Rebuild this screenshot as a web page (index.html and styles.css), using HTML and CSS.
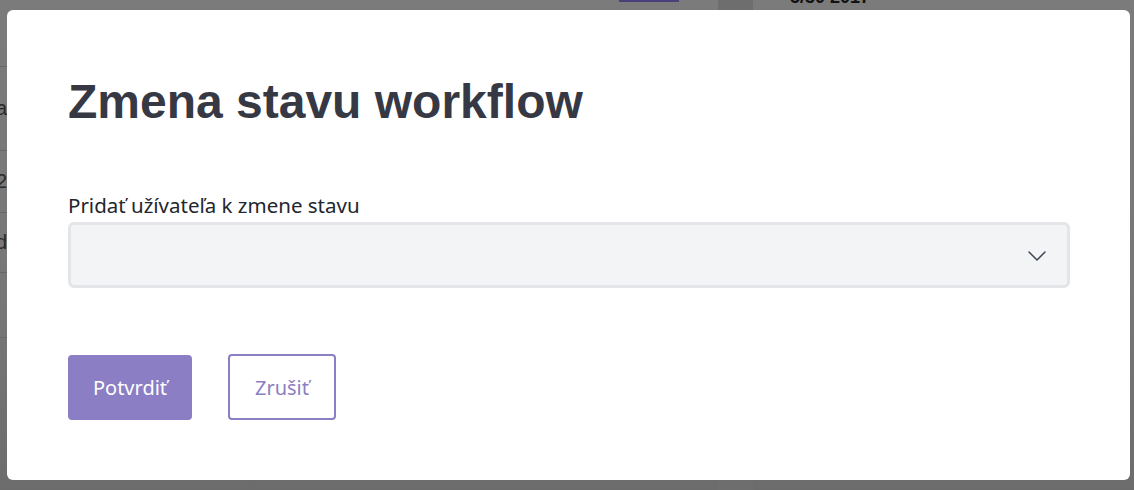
FILE: index.html
```html
<!DOCTYPE html>
<html lang="sk">
<head>
<meta charset="utf-8">
<title>Zmena stavu workflow</title>
<link rel="stylesheet" href="styles.css">
</head>
<body>
<div class="page">
  <div class="table-col">
    <div class="row r1"></div>
    <div class="row r2"><span class="cell">a</span></div>
    <div class="row r3"><span class="cell">2</span></div>
    <div class="row r4"><span class="cell">d</span></div>
    <div class="row r5"></div>
  </div>
  <div class="strip"></div>
  <div class="side-col">
    <div class="side-text">5/30 2017</div>
  </div>
</div>

<div class="overlay">
  <div class="modal" role="dialog" aria-labelledby="modal-title">
    <h1 id="modal-title" class="modal-title">Zmena stavu workflow</h1>
    <div class="field">
      <label class="field-label" for="user-select">Pridať užívateľa k zmene stavu</label>
      <div class="select" id="user-select" tabindex="0">
        <svg class="chevron" width="18" height="10" viewBox="0 0 18 10" aria-hidden="true">
          <path d="M1 1 L9 9 L17 1" fill="none" stroke="#3f4654" stroke-width="1.5" stroke-linecap="round" stroke-linejoin="round"/>
        </svg>
      </div>
    </div>
    <div class="actions">
      <button class="btn btn-primary" type="button">Potvrdiť</button>
      <button class="btn btn-outline" type="button">Zrušiť</button>
    </div>
  </div>
</div>
</body>
</html>
```

FILE: styles.css
```css
html, body {
  margin: 0;
  padding: 0;
}

body {
  width: 1134px;
  height: 490px;
  overflow: hidden;
  position: relative;
  background: linear-gradient(#7b7b7b, #777777 60%, #6c6c6c);
  font-family: "Noto Sans", "Open Sans", sans-serif;
}

/* dimmed page behind the dialog */
.page {
  display: grid;
  grid-template-columns: 718px 35px 1fr;
  height: 490px;
}

.table-col {
  display: flex;
  flex-direction: column;
  position: relative;
}

.table-col::before {
  content: "";
  position: absolute;
  left: 619px;
  top: 0;
  width: 60px;
  height: 2px;
  background: #4a3f78;
}

.row {
  border-bottom: 1px solid #686868;
  display: flex;
  align-items: center;
  font-family: "Liberation Sans", sans-serif;
  font-size: 20px;
  color: #2a2a2a;
}

.r1 { height: 66px; }
.r2 { height: 83px; }
.r3 { height: 61px; }
.r4 { height: 59px; }
.r5 { height: 64px; }

.cell {
  margin-left: -4px;
}

.strip {
  background: #6e6e6e;
}

.side-col {
  padding-left: 37px;
}

.side-text {
  font-family: "Liberation Sans", sans-serif;
  font-weight: bold;
  font-size: 18px;
  line-height: 18px;
  color: #111111;
  transform: translateY(-12px);
}

/* overlay + dialog */
.overlay {
  position: absolute;
  inset: 0;
}

.modal {
  position: absolute;
  left: 7px;
  top: 10px;
  width: 1123px;
  height: 470px;
  box-sizing: border-box;
  background: #ffffff;
  border-radius: 6px;
  padding: 68px 60px 0 61px;
}

.modal-title {
  margin: 0;
  font-family: "Liberation Sans", Arial, sans-serif;
  font-weight: bold;
  font-size: 48px;
  line-height: 48px;
  color: #363944;
}

.field {
  margin-top: 66px;
  display: flex;
  flex-direction: column;
}

.field-label {
  font-size: 20.5px;
  line-height: 26px;
  color: #22262e;
  margin-bottom: 4px;
}

.select {
  box-sizing: border-box;
  height: 66px;
  width: 1002px;
  background: #f3f4f6;
  border: 3px solid #e3e5e9;
  border-radius: 6px;
  display: flex;
  align-items: center;
  justify-content: flex-end;
  padding-right: 21px;
}

.chevron {
  display: block;
  margin-top: 2px;
}

.actions {
  margin-top: 66px;
  display: flex;
  gap: 36px;
  align-items: center;
}

.btn {
  box-sizing: border-box;
  height: 65px;
  border-radius: 4px;
  font-family: "Noto Sans", "Open Sans", sans-serif;
  font-size: 20px;
  cursor: pointer;
  padding: 0;
}

.btn-primary {
  width: 124px;
  background: #8b7ec4;
  color: #ffffff;
  border: none;
}

.btn-outline {
  width: 108px;
  height: 66px;
  background: #ffffff;
  color: #8b7ec4;
  border: 2px solid #8b7ec4;
}
```
